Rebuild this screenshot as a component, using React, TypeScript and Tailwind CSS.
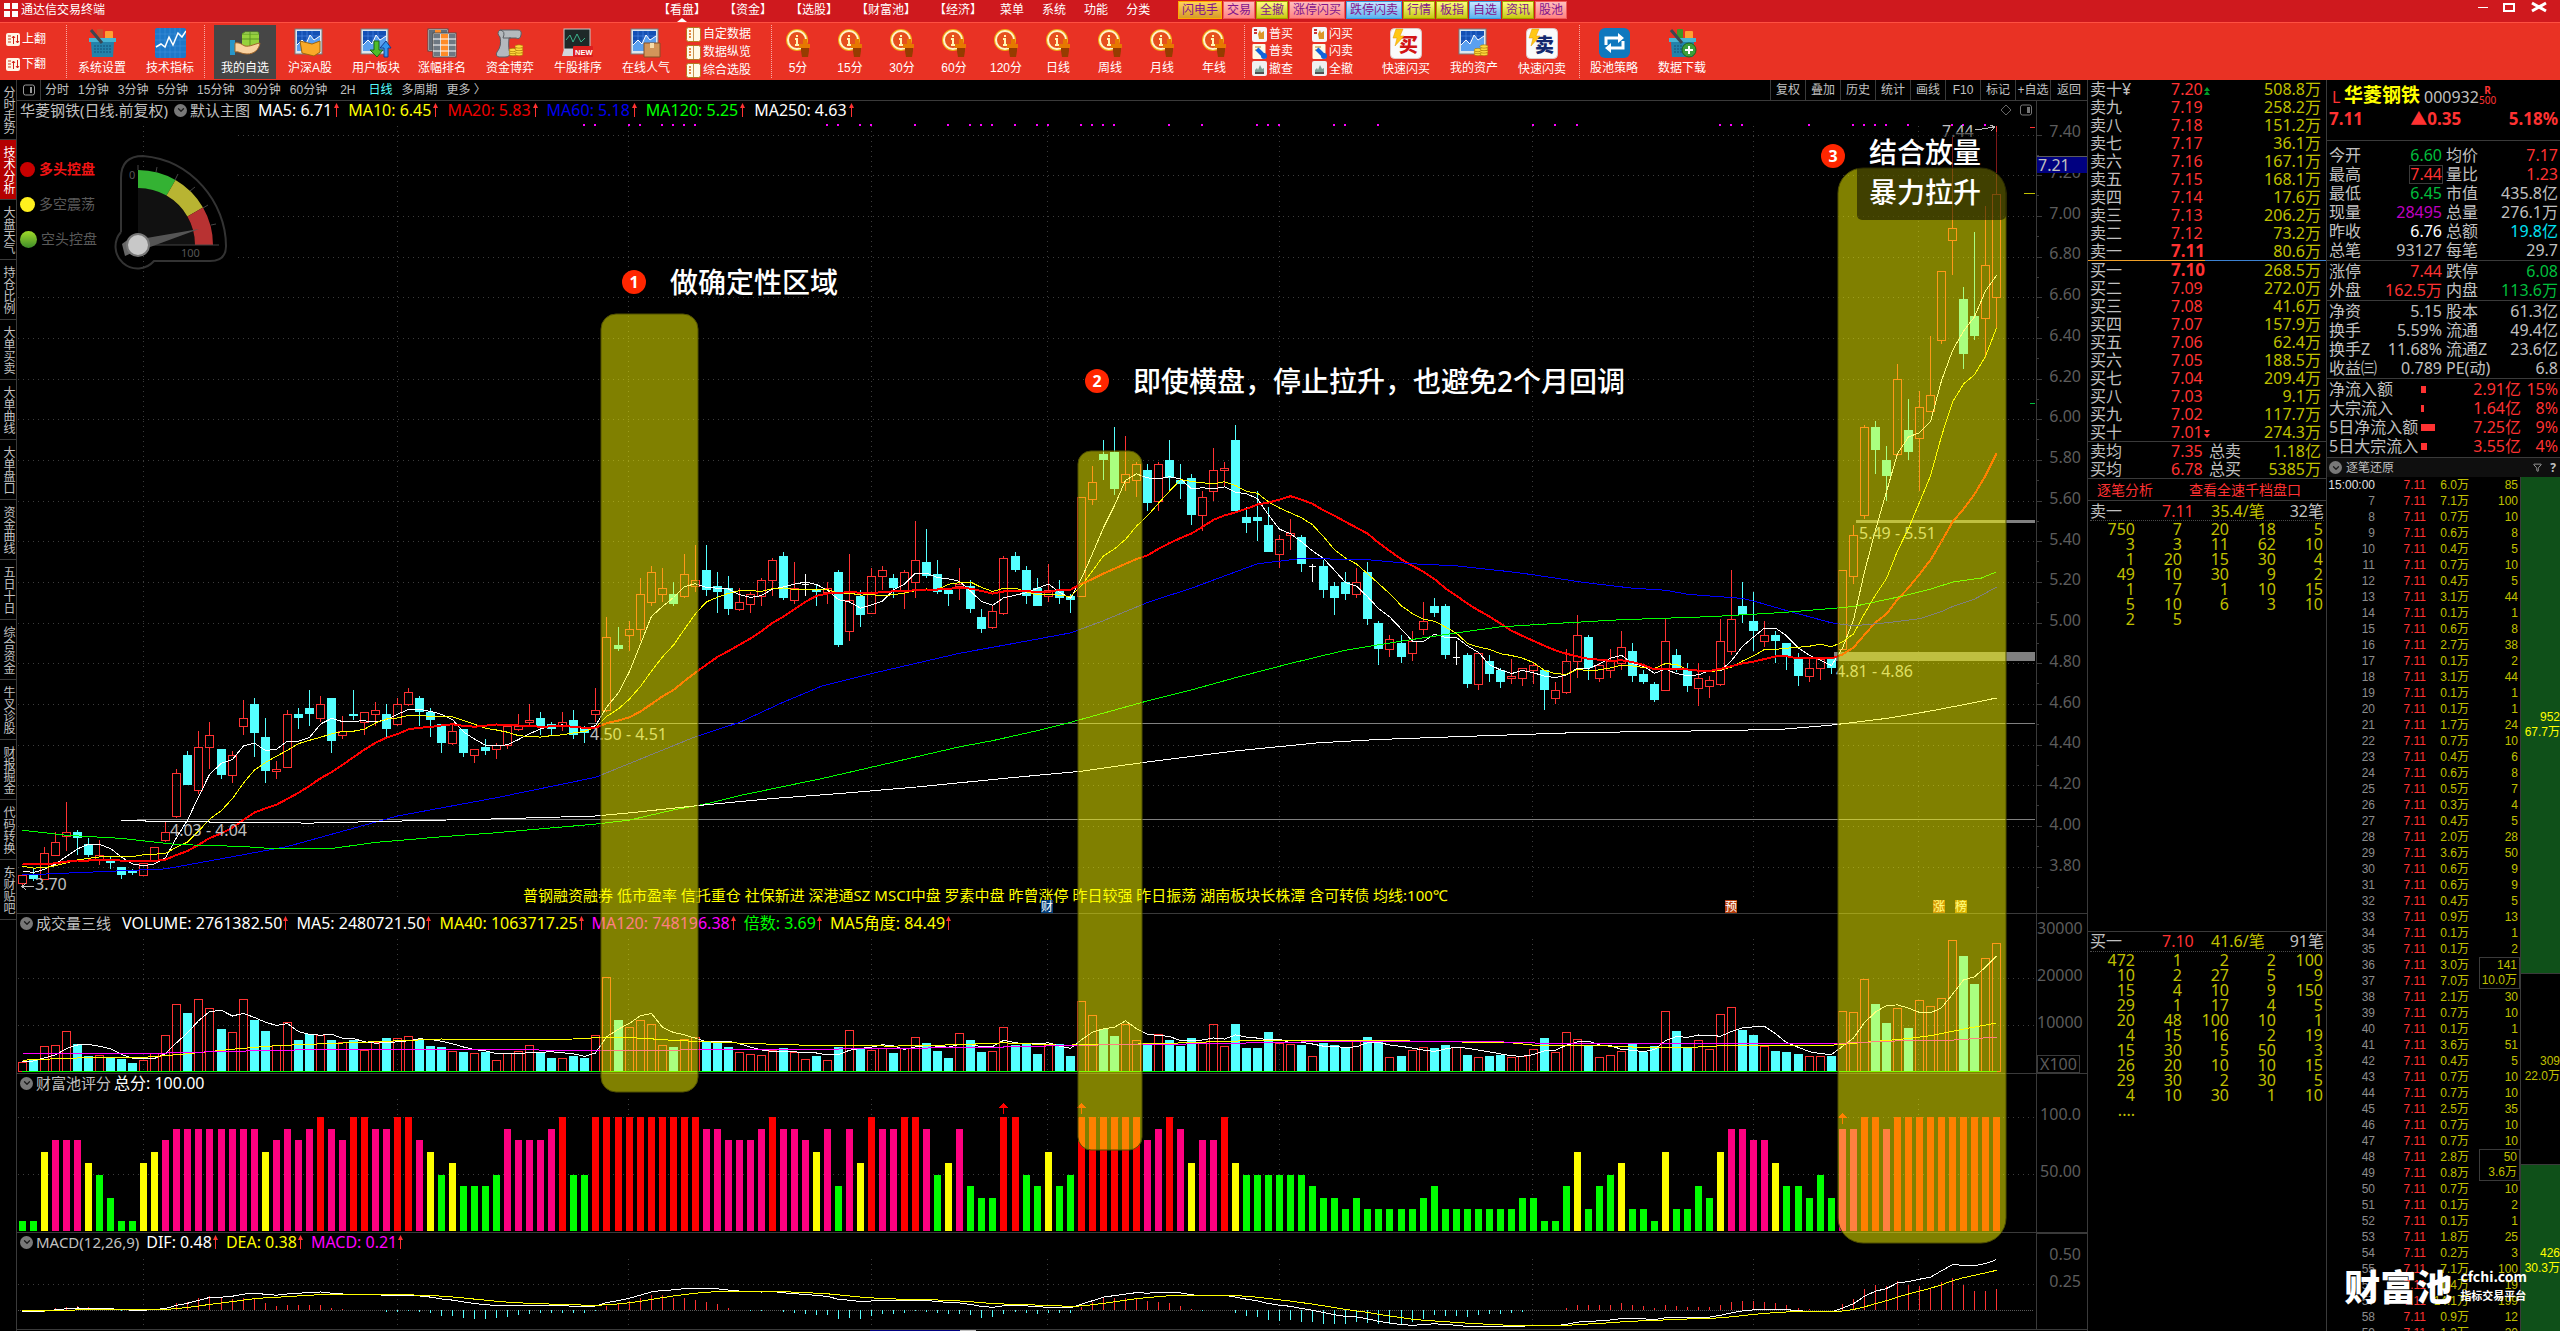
import type { ReactNode } from "react";
import clsx from "clsx";
import { ChevronDown, Filter } from "lucide-react";

type Point = [number, number];
type Candle = [number, number, number, number];

// open, high, low, close (cents)
const candles: Candle[] = [
  [372, 376, 370, 376], [376, 379, 373, 374], [374, 390, 374, 387], [386, 397, 386, 392], [395, 412, 388, 397],
  [397, 398, 386, 394], [391, 394, 385, 386], [384, 393, 381, 386], [384, 385, 379, 382], [380, 380, 374, 376],
  [378, 379, 376, 377], [376, 382, 376, 382], [383, 390, 383, 390], [393, 402, 392, 397], [405, 428, 404, 426],
  [435, 437, 420, 420], [418, 447, 416, 439], [439, 451, 428, 445], [438, 438, 423, 425], [425, 437, 421, 435],
  [449, 462, 445, 453], [460, 463, 434, 446], [444, 453, 421, 427], [427, 432, 423, 428], [429, 457, 429, 455],
  [455, 458, 448, 453], [458, 467, 449, 455], [453, 464, 451, 460], [463, 463, 436, 442], [445, 454, 443, 447],
  [455, 467, 452, 454], [451, 456, 445, 456], [455, 461, 449, 457], [455, 460, 444, 448], [450, 463, 449, 460],
  [460, 468, 459, 466], [463, 464, 449, 456], [456, 458, 444, 452], [450, 450, 436, 441], [441, 450, 440, 447],
  [448, 448, 434, 436], [435, 438, 431, 438], [439, 443, 435, 437], [438, 441, 433, 440], [440, 450, 438, 449],
  [448, 455, 447, 449], [451, 460, 449, 452], [453, 456, 445, 449], [450, 451, 445, 448], [449, 456, 447, 451],
  [452, 457, 443, 445], [448, 449, 441, 446], [455, 468, 451, 457], [457, 503, 456, 493], [489, 498, 486, 487],
  [494, 501, 486, 497], [497, 522, 491, 514], [510, 528, 508, 525], [514, 527, 510, 517], [514, 520, 508, 509],
  [513, 534, 512, 524], [518, 538, 515, 521], [526, 538, 513, 516], [518, 525, 505, 515], [517, 523, 504, 507],
  [507, 517, 506, 510], [509, 515, 505, 514], [513, 522, 508, 521], [521, 532, 513, 531], [533, 535, 511, 512],
  [511, 530, 509, 517], [519, 524, 513, 519], [516, 519, 508, 515], [515, 520, 509, 517], [525, 526, 488, 489],
  [496, 534, 491, 511], [513, 516, 498, 504], [505, 527, 505, 523], [523, 528, 516, 526], [522, 524, 512, 517],
  [516, 526, 507, 525], [520, 550, 512, 531], [530, 546, 522, 523], [524, 531, 514, 515], [516, 516, 508, 514],
  [518, 527, 511, 519], [518, 521, 505, 507], [503, 507, 495, 497], [498, 508, 497, 506], [505, 533, 504, 532],
  [533, 535, 525, 526], [526, 528, 509, 513], [517, 522, 508, 508], [513, 529, 510, 516], [516, 521, 509, 512],
  [513, 514, 505, 511], [513, 562, 513, 562], [561, 577, 558, 569], [583, 590, 570, 580], [584, 596, 563, 566],
  [569, 592, 565, 573], [570, 579, 562, 578], [575, 578, 555, 559], [560, 579, 555, 578], [580, 590, 565, 571],
  [570, 578, 561, 568], [571, 573, 548, 553], [553, 565, 545, 562], [565, 586, 560, 575], [575, 579, 567, 576],
  [590, 597, 555, 555], [552, 557, 544, 549], [552, 565, 540, 550], [548, 557, 535, 535], [534, 543, 527, 541],
  [543, 551, 536, 544], [542, 543, 525, 529], [528, 529, 520, 528], [528, 531, 512, 516], [518, 520, 504, 512],
  [520, 525, 511, 514], [514, 527, 512, 520], [525, 530, 499, 502], [500, 501, 479, 487], [487, 494, 483, 492],
  [490, 494, 480, 483], [485, 496, 481, 491], [497, 510, 494, 501], [508, 512, 503, 505], [508, 509, 482, 484],
  [483, 491, 479, 483], [484, 485, 468, 470], [470, 485, 467, 485], [481, 484, 471, 475], [477, 478, 468, 471],
  [473, 482, 470, 474], [473, 478, 469, 478], [477, 480, 470, 479], [477, 477, 457, 467], [463, 471, 460, 467],
  [466, 487, 465, 481], [481, 504, 473, 494], [493, 494, 472, 478], [473, 480, 471, 479], [477, 487, 473, 481],
  [480, 496, 477, 488], [486, 490, 471, 474], [475, 477, 470, 471], [470, 471, 461, 462], [467, 502, 467, 491],
  [484, 487, 476, 477], [477, 480, 466, 469], [468, 480, 459, 473], [469, 474, 463, 472], [470, 502, 469, 491],
  [486, 526, 484, 502], [508, 520, 500, 504], [501, 515, 486, 496], [491, 501, 488, 494], [494, 496, 480, 491],
  [490, 490, 477, 483], [483, 485, 469, 474], [474, 483, 471, 478], [478, 483, 472, 482], [482, 482, 475, 478],
  [487, 526, 487, 526], [523, 548, 519, 543], [553, 597, 551, 596], [596, 599, 573, 585], [580, 587, 560, 572],
  [583, 627, 582, 620], [595, 610, 580, 584], [591, 614, 565, 606], [604, 641, 604, 612], [639, 673, 637, 673],
  [688, 739, 671, 694], [659, 665, 625, 632], [651, 692, 639, 641], [650, 705, 630, 676], [660, 744, 645, 711],
];

// closes before the first visible candle, needed by the averages
const history = [383, 385, 382, 380, 384, 386, 383, 380, 382, 384, 383, 385, 383, 382, 380, 378, 379, 379, 378];

// volume in units of 100
const volumes = [
  21, 28, 55, 57, 87, 60, 33, 36, 30, 28, 20, 26, 40, 79, 145, 126, 155, 136, 92, 85, 155, 111, 86, 57, 106, 69, 81, 78, 67, 63,
  67, 46, 63, 73, 72, 77, 67, 56, 54, 45, 43, 40, 42, 26, 40, 44, 57, 43, 30, 30, 33, 30, 79, 202, 111, 95, 111, 102, 57, 54,
  71, 74, 66, 63, 54, 43, 38, 36, 47, 51, 42, 28, 34, 26, 54, 89, 48, 47, 52, 41, 52, 74, 62, 45, 30, 83, 69, 43, 45, 95,
  58, 61, 39, 57, 60, 35, 151, 121, 92, 77, 102, 68, 60, 81, 67, 56, 73, 63, 102, 55, 101, 50, 52, 84, 62, 60, 58, 33, 61, 58,
  51, 65, 75, 65, 32, 35, 47, 53, 52, 58, 53, 37, 32, 33, 37, 32, 34, 49, 73, 43, 85, 70, 57, 32, 36, 45, 60, 43, 55, 130,
  88, 52, 68, 49, 123, 138, 90, 79, 55, 45, 43, 39, 34, 34, 35, 130, 128, 198, 145, 105, 136, 94, 153, 140, 157, 281, 247, 186, 243, 274,
];

const scores = [
  10, 10, 70, 80, 80, 80, 60, 50, 30, 10, 10, 60, 70, 80, 90, 90, 90, 90, 90, 90, 90, 90, 70, 80, 90, 80, 90, 100, 90, 80,
  100, 100, 90, 90, 100, 100, 80, 70, 50, 60, 40, 40, 40, 50, 90, 80, 80, 80, 90, 100, 50, 50, 100, 100, 100, 100, 100, 100, 100, 100,
  100, 100, 90, 90, 80, 80, 80, 90, 100, 90, 90, 80, 70, 90, 40, 90, 60, 100, 90, 90, 100, 100, 90, 50, 60, 90, 40, 30, 30, 100,
  100, 50, 40, 70, 40, 50, 100, 100, 100, 100, 100, 100, 80, 90, 100, 90, 60, 80, 80, 100, 60, 50, 50, 50, 50, 50, 50, 40, 30, 30,
  20, 30, 20, 20, 20, 20, 20, 30, 40, 20, 20, 20, 20, 20, 20, 20, 30, 30, 10, 10, 40, 70, 20, 40, 50, 60, 20, 20, 10, 70,
  20, 20, 40, 30, 70, 90, 90, 80, 80, 60, 40, 40, 30, 50, 30, 90, 90, 100, 100, 90, 100, 100, 100, 100, 100, 100, 100, 100, 100, 100,
];

const ma60: Point[] = [
  [0, 376], [13, 379], [19, 385], [24, 390], [34, 405], [43, 414], [52, 424], [61, 444], [65, 451], [69, 461], [72.5, 469],
  [77, 475], [85, 485], [90, 490], [95, 495], [98, 501], [102, 510], [106, 517], [110, 525], [112, 529], [116, 531.6],
  [122, 531], [126, 529], [130, 528], [135, 525], [137, 523.6], [141.4, 520], [146, 517], [149, 516], [151, 514], [156, 512],
  [157.4, 510], [160, 506], [164, 500], [166, 498.5], [169, 500], [172, 502], [174, 505.5], [175, 508], [177, 511.6], [179, 517.6],
];
const ma120: Point[] = [
  [0, 398], [4, 395.5], [9, 394], [14, 391], [20, 390], [22.5, 389], [28, 389], [32, 392], [38.5, 395], [42.5, 396.6],
  [52, 401], [55, 403], [59, 408], [62, 411], [65, 415], [69, 419.5], [72.6, 423.6], [77, 429], [81, 434], [85, 439],
  [88, 442], [92, 447], [95, 451], [98, 455.6], [102, 461.6], [106, 467], [110, 473], [115, 480], [120, 486.5], [125, 491],
  [130, 495], [134, 498], [140, 500], [145, 501.5], [153, 503], [159.5, 505], [164, 507], [166, 508], [170.4, 513],
  [173, 516.5], [175, 520], [177.6, 522], [179, 525],
];
const ma250: Point[] = [
  [9, 403], [10.5, 402.6], [17.5, 402], [26, 401.5], [30, 402], [42.5, 403.5], [52, 405], [55, 406.5], [61.6, 410.3],
  [68, 413.6], [74, 416], [80.6, 419], [90, 424], [96, 427], [102, 431.6], [110, 437], [117.5, 441], [123, 442.6],
  [130, 444], [141, 446], [154, 447], [159.5, 447.6], [164, 449.7], [169, 453], [173, 456.6], [176, 459.7], [179, 463],
];
const volMa40: Point[] = [
  [0, 25], [4, 29], [7, 31], [11, 31], [14.7, 38], [19.4, 49], [23, 56], [27.5, 60], [35, 67], [38, 70], [43, 68], [50, 70],
  [53, 74], [56, 72], [59, 67], [63, 63], [66.5, 60], [71, 57], [79, 55], [85, 58], [89, 62], [94, 57], [103, 60], [107.6, 64],
  [112, 67], [124, 67], [127, 65], [135, 62], [137, 57], [142, 57], [146, 53], [152, 53], [155, 57], [164, 57], [167, 63],
  [170.6, 70], [173, 77], [176, 91], [179, 104],
];
const volMa120: Point[] = [
  [0, 40], [12.5, 40], [17.5, 43], [23, 46], [28, 48], [43, 48], [52, 45], [56, 46], [67, 48], [76, 49], [89, 53], [96, 57],
  [108, 60], [114, 63], [120, 65], [133, 65], [136, 62], [141, 60], [164, 60], [167, 63], [170, 66], [174, 66], [179, 74],
];

const signalDots = [
  51, 52, 55, 56, 58, 59, 60, 61, 73, 74, 76, 77, 81, 84, 86, 87, 88, 90, 92, 93, 96, 97, 98, 99, 104, 107, 112, 113, 114,
  119, 120, 123, 137, 139, 141, 154, 155, 156, 162, 166, 167, 168, 169, 171, 175, 176, 178,
];
const monthLines = [143, 397, 628, 871, 1047, 1279, 1532, 1753, 1918];

const RED = "#ff3232";
const CYAN = "#54ffff";

const xAt = (i: number) => Math.round(22 + i * 11.028);
const priceY = (cents: number) => 134.6 + (740 - cents) * 2.034;
const volumeY = (v: number) => 1072 - v * 0.471;
const scoreY = (v: number) => 1232 - v * 1.15;
const macdY = (v: number) => 1310 - v * 1.04;

const closes = candles.map((c) => c[3]);

const average = (values: number[], n: number, before: number[]) => {
  const all = [...before, ...values];
  return values.map((_, i) => {
    const end = i + before.length + 1;
    const part = all.slice(Math.max(0, end - n), end);
    return part.reduce((a, b) => a + b, 0) / part.length;
  });
};

const ema = (values: number[], n: number) => {
  let last = values[0];
  return values.map((v) => (last = last + ((v - last) * 2) / (n + 1)));
};

const fast = ema([...history, ...closes], 12);
const slow = ema([...history, ...closes], 26);
const difAll = fast.map((v, i) => v - slow[i]);
const deaAll = ema(difAll, 9);
const dif = difAll.slice(history.length);
const dea = deaAll.slice(history.length);

const linePoints = (points: Point[], y: (v: number) => number) =>
  points.map(([i, v]) => `${xAt(i) + 0.5},${y(v).toFixed(1)}`).join(" ");
const indexed = (values: number[]): Point[] => values.map((v, i) => [i, v]);

const Line = ({ points, y, color, width = 1 }: { points: Point[]; y: (v: number) => number; color: string; width?: number }) => (
  <polyline points={linePoints(points, y)} fill="none" stroke={color} strokeWidth={width} />
);

const Grid = ({ rows, top, bottom }: { rows: number[]; top: number; bottom: number }) => (
  <g stroke="#3c3c3c" strokeDasharray="1 4">
    {rows.map((y) => (
      <line key={y} x1={y < 260 ? 238 : 18} x2={2034} y1={Math.round(y) + 0.5} y2={Math.round(y) + 0.5} />
    ))}
    {monthLines.map((x) => (
      <line key={x} x1={x + 0.5} x2={x + 0.5} y1={top} y2={bottom} />
    ))}
  </g>
);

const UpArrow = ({ className }: { className?: string }) => (
  <svg className={clsx("inline-block h-[14px] w-[7px]", className)} viewBox="0 0 7 14">
    <path d="M3.5 1v13" stroke={RED} />
    <path d="M1 5l2.500-5L6 5z" fill={RED} />
  </svg>
);

const Collapse = () => (
  <button className="flex size-[13px] items-center justify-center rounded-full bg-[#787878]" aria-label="折叠">
    <ChevronDown size={10} strokeWidth={3} color="#1c1c1c" />
  </button>
);

interface Value {
  text: string;
  color: string;
}

const PanelHeader = ({ title, values }: { title: string; values: Value[] }) => (
  <div className="relative flex h-[18px] items-center gap-[7px] pl-[3px] leading-[18px]">
    <div className="flex items-center gap-[3px]">
      <Collapse />
      <span className="text-[15px] text-[#c0c0c0]">{title}</span>
    </div>
    {values.map((v) => (
      <span key={v.text} className={clsx("flex items-center whitespace-nowrap", v.color)}>
        {v.text}
        <UpArrow />
      </span>
    ))}
  </div>
);

const AxisColumn = ({ className, children }: { className?: string; children: ReactNode }) => (
  <div className={clsx("relative flex w-[51px] shrink-0 flex-col border-l border-[#3a3a3a] pr-[6px] text-right leading-4 text-[#5c5c5c]", className)}>
    {children}
  </div>
);

const priceLabels = Array.from({ length: 19 }, (_, i) => 740 - i * 20);
const mainValues: Value[] = [
  { text: "MA5: 6.71", color: "text-white" },
  { text: "MA10: 6.45", color: "text-[#ffff00]" },
  { text: "MA20: 5.83", color: "text-[#f00000]" },
  { text: "MA60: 5.18", color: "text-[#0000f0]" },
  { text: "MA120: 5.25", color: "text-[#00ff00]" },
  { text: "MA250: 4.63", color: "text-white" },
];

const CandleShape = ({ candle, index }: { candle: Candle; index: number }) => {
  const [open, high, low, close] = candle;
  const x = xAt(index);
  const color = close > open ? RED : close < open ? CYAN : "#ffffff";
  const top = Math.round(priceY(Math.max(open, close)));
  const bottom = Math.round(priceY(Math.min(open, close)));
  return (
    <g stroke={color}>
      <line x1={x + 0.5} x2={x + 0.5} y1={priceY(high)} y2={top} />
      <line x1={x + 0.5} x2={x + 0.5} y1={bottom} y2={priceY(low)} />
      {close > open && <rect x={x - 3.5} y={top + 0.5} width={8} height={Math.max(2, bottom - top)} fill="none" />}
      {close < open && <rect x={x - 4} y={top} width={9} height={Math.max(2, bottom - top)} fill={color} stroke="none" />}
      {close === open && <line x1={x - 3} x2={x + 4} y1={top + 0.5} y2={top + 0.5} />}
    </g>
  );
};

const Gauge = () => (
  <svg className="absolute top-[52px] left-[96px] h-[118px] w-[118px]" viewBox="113 153 118 118">
    <path
      d="M121 232V178q0-22 22-22C192 160 226 203 226 246q0 15-16 15H154a18 18 0 1 1-33-29"
      fill="none"
      stroke="#333"
      strokeWidth="2"
    />
    <path d="M138 245V188a57 57 0 0 1 57 57z" fill="#111" />
    <path d="M138 170a75 75 0 0 1 37.500 10L166.500 195.600A57 57 0 0 0 138 188z" fill="#34b233" />
    <path d="M175.500 180A75 75 0 0 1 203 207.500L187.400 216.500A57 57 0 0 0 166.500 195.600z" fill="#b8b432" />
    <path d="M203 207.500A75 75 0 0 1 213 245H195a57 57 0 0 0-7.600-28.500z" fill="#b83232" />
    <g stroke="#444">
      <path d="M138 165v5M157 167l-1 5M178 174l-3 6M195 187l-5 4M208 205l-5 3M216 224l-5 1M138 245h81" />
    </g>
    <path d="M135 240L199 229L142 250z" fill="#555" />
    <path d="M122 244l8-6 4 14-9 4z" fill="#666" />
    <circle cx="138" cy="245" r="11" fill="#c8c8c8" stroke="#777" strokeWidth="2" />
    <text x="129" y="179" fontSize="11" fill="#555">0</text>
    <text x="181" y="257" fontSize="11" fill="#555">100</text>
  </svg>
);

const Legend = () => (
  <ul className="absolute top-[58px] left-[3px] flex flex-col gap-[15px] text-sm leading-5 text-[#5a5a5a]">
    <li className="flex items-center gap-1">
      <span className="size-[15px] rounded-full bg-[#c80000]" />
      <span className="font-bold text-[#f01414]">多头控盘</span>
    </li>
    <li className="flex items-center gap-1">
      <span className="size-[15px] rounded-full bg-[#fff01e]" />
      多空震荡
    </li>
    <li className="flex items-center gap-1">
      <span className="size-[17px] rounded-full bg-linear-to-b from-[#a0dc28] to-[#3c8c28]" />
      空头控盘
    </li>
  </ul>
);

const marks = [
  { x: 1041, text: "财", fill: "#003c78", color: "#ffffff" },
  { x: 1725, text: "预", fill: "#b43c0a", color: "#ffffff" },
  { x: 1933, text: "涨", fill: "#b43c0a", color: "#ffffff" },
  { x: 1955, text: "榜", fill: "#b46400", color: "#ffffff" },
];

const PricePanel = () => (
  <section className="flex min-h-0 border-b border-[#3a3a3a]">
    <div className="relative min-w-0 flex-1">
      <svg className="absolute inset-0 h-full w-full" viewBox="17 101 2019 812" preserveAspectRatio="none" shapeRendering="crispEdges">
        <Grid rows={priceLabels.map(priceY)} top={126} bottom={900} />
        <g fill="#808080">
          <rect x="588" y="723" width="1447" height="1" />
          <rect x="137" y="819" width="1898" height="1" />
          <rect x="1856" y="520" width="179" height="3" />
          <rect x="1834" y="652" width="201" height="9" />
        </g>
        {candles.map((c, i) => (
          <CandleShape key={i} candle={c} index={i} />
        ))}
        <Line points={indexed(average(closes, 5, history))} y={priceY} color="#ffffff" />
        <Line points={indexed(average(closes, 10, history))} y={priceY} color="#ffff00" />
        <Line points={indexed(average(closes, 20, history))} y={priceY} color="#ff0000" width={2} />
        <Line points={ma60} y={priceY} color="#0000ff" />
        <Line points={ma120} y={priceY} color="#00ff00" />
        <Line points={ma250} y={priceY} color="#ffffff" />
        {signalDots.map((i) => (
          <rect key={i} x={xAt(i) - 1} y="124" width="2" height="2" fill="#ff00ff" />
        ))}
        <path d="M2030 127.500h5" stroke={RED} />
        <path d="M2024 193.500h11" stroke="#c0c000" />
        <path d="M2030 403.500h5" stroke="#00be3c" />
        <g fill="#c0c0c0" fontSize="16">
          <text x="170" y="836">4.03 - 4.04</text>
          <text x="590" y="740">4.50 - 4.51</text>
          <text x="1859" y="539">5.49 - 5.51</text>
          <text x="1836" y="677">4.81 - 4.86</text>
          <text x="35" y="890">3.70</text>
          <text x="1942" y="137">7.44</text>
        </g>
        <path d="M34 886.500H22m4-3l-4 3 4 3M1975 130l20-3m-5-2l5 2-4 4" stroke="#c0c0c0" fill="none" />
        <text x="523" y="901" fill="#ffff00" fontSize="15">
          普钢融资融券 低市盈率 信托重仓 社保新进 深港通SZ MSCI中盘 罗素中盘 昨曾涨停 昨日较强 昨日振荡 湖南板块长株潭 含可转债 均线:100℃
        </text>
        {marks.map((m) => (
          <g key={m.text}>
            <rect x={m.x} y="900" width="12" height="13" fill={m.fill} />
            <text x={m.x} y="911" fontSize="12" fill={m.color}>{m.text}</text>
          </g>
        ))}
      </svg>
      <div className="relative flex h-[18px] items-center gap-2 pl-[3px] leading-[18px]">
        <div className="flex items-center gap-[3px] text-[15px] text-[#c0c0c0]">
          <span className="pr-[3px]">华菱钢铁(日线.前复权)</span>
          <Collapse />
          <span>默认主图</span>
        </div>
        {mainValues.map((v) => (
          <span key={v.text} className={clsx("flex items-center gap-px whitespace-nowrap", v.color)}>
            {v.text}
            <UpArrow />
          </span>
        ))}
        <div className="ml-auto flex items-center gap-2 pr-1">
          <svg width="12" height="12" viewBox="0 0 12 12">
            <path d="M6 1l5 5-5 5-5-5z" fill="none" stroke="#666" />
          </svg>
          <svg width="12" height="12" viewBox="0 0 12 12">
            <rect x="0.500" y="1" width="11" height="10" rx="2" fill="none" stroke="#777" />
            <rect x="7" y="3" width="3" height="6" fill="#777" />
          </svg>
        </div>
      </div>
      <Legend />
      <Gauge />
    </div>
    <AxisColumn className="justify-between pt-[22px] pb-[40px]">
      <svg className="absolute inset-0 h-full w-full" viewBox="0 101 50 812" preserveAspectRatio="none" stroke="#3a3a3a">
        {priceLabels.map((p) => (
          <path key={p} d={`M0 ${Math.round(priceY(p)) + 0.5}h5m-5 20h2`} />
        ))}
      </svg>
      {priceLabels.map((p) => (
        <span key={p} className="relative">{(p / 100).toFixed(2)}</span>
      ))}
      <span className="absolute top-[55px] right-0 left-0 border-t border-[#5c5c5c] bg-[#000080] pl-px text-left leading-4 text-[#c0c0c0]">7.21</span>
    </AxisColumn>
  </section>
);

const VolumePanel = () => (
  <section className="flex min-h-0 border-b border-[#3a3a3a]">
    <div className="relative min-w-0 flex-1">
      <svg className="absolute inset-0 h-full w-full" viewBox="17 914 2019 159" preserveAspectRatio="none" shapeRendering="crispEdges">
        <Grid rows={[978, 1025]} top={939} bottom={1072} />
        {volumes.map((v, i) => {
          const y = Math.round(volumeY(v));
          const up = candles[i][3] >= candles[i][0];
          return up ? (
            <rect key={i} x={xAt(i) - 3.5} y={y + 0.5} width={8} height={1071 - y} fill="none" stroke={RED} />
          ) : (
            <rect key={i} x={xAt(i) - 4} y={y} width={9} height={1072 - y} fill={CYAN} />
          );
        })}
        <Line points={indexed(average(volumes, 5, [20, 22, 24, 22]))} y={volumeY} color="#ffffff" />
        <Line points={volMa40} y={volumeY} color="#ffff00" />
        <Line points={volMa120} y={volumeY} color="#ff00ff" />
        <rect x="22" y="1071" width="1975" height="1" fill="#00ff00" />
      </svg>
      <PanelHeader
        title="成交量三线"
        values={[
          { text: "VOLUME: 2761382.50", color: "pl-1 text-white" },
          { text: "MA5: 2480721.50", color: "text-white" },
          { text: "MA40: 1063717.25", color: "text-[#ffff00]" },
          { text: "MA120: 748196.38", color: "text-[#ff00ff]" },
          { text: "倍数: 3.69", color: "text-[#00ff00]" },
          { text: "MA5角度: 84.49", color: "text-[#ffff00]" },
        ]}
      />
    </div>
    <AxisColumn className="gap-[31px] pt-[6px]">
      <span>30000</span>
      <span>20000</span>
      <span>10000</span>
      <span className="absolute bottom-0 left-0 border border-[#3a3a3a] px-[2px]">X100</span>
    </AxisColumn>
  </section>
);

const scoreColor = (s: number) => (s > 90 ? "#ff0000" : s > 70 ? "#ff0080" : s > 50 ? "#ffff00" : "#00ff00");

const ScorePanel = () => (
  <section className="flex min-h-0 border-b border-[#3a3a3a]">
    <div className="relative min-w-0 flex-1">
      <svg className="absolute inset-0 h-full w-full" viewBox="17 1074 2019 158" preserveAspectRatio="none" shapeRendering="crispEdges">
        <Grid rows={[1117, 1174]} top={1099} bottom={1232} />
        {scores.map((s, i) => (
          <rect key={i} x={xAt(i) - 3} y={scoreY(s)} width={7} height={1231 - scoreY(s)} fill={scoreColor(s)} />
        ))}
        {[[89, 1103], [96, 1103], [165, 1113]].map(([i, y]) => (
          <g key={i} fill="#ff0000">
            <path d={`M${xAt(i) - 4} ${y + 5}l4.500-5 4.500 5z`} />
            <rect x={xAt(i)} y={y + 4} width={1} height={7} />
          </g>
        ))}
      </svg>
      <div className="relative flex h-[18px] items-center gap-[3px] pl-[3px] leading-[18px]">
        <Collapse />
        <span className="text-[15px] text-[#c0c0c0]">财富池评分</span>
        <span className="text-white">总分: 100.00</span>
      </div>
    </div>
    <AxisColumn className="gap-[41px] pt-8">
      <span>100.0</span>
      <span>50.00</span>
    </AxisColumn>
  </section>
);

const MacdPanel = () => (
  <section className="flex min-h-0 border-b border-[#3a3a3a]">
    <div className="relative min-w-0 flex-1">
      <svg className="absolute inset-0 h-full w-full" viewBox="17 1233 2019 96" preserveAspectRatio="none" shapeRendering="crispEdges">
        <Grid rows={[1284]} top={1259} bottom={1328} />
        <line x1="18" x2="2034" y1="1310.500" y2="1310.500" stroke="#5a5a5a" strokeDasharray="1 1" />
        {dif.map((d, i) => {
          const bar = (d - dea[i]) * 2;
          return <line key={i} x1={xAt(i) + 0.5} x2={xAt(i) + 0.5} y1="1310" y2={macdY(bar)} stroke={bar > 0 ? RED : CYAN} />;
        })}
        <Line points={indexed(dif)} y={macdY} color="#ffffff" />
        <Line points={indexed(dea)} y={macdY} color="#ffff00" />
      </svg>
      <PanelHeader
        title="MACD(12,26,9)"
        values={[
          { text: "DIF: 0.48", color: "text-white" },
          { text: "DEA: 0.38", color: "text-[#ffff00]" },
          { text: "MACD: 0.21", color: "text-[#ff00ff]" },
        ]}
      />
    </div>
    <AxisColumn className="gap-[11px] border-t pt-3">
      <span>0.50</span>
      <span>0.25</span>
    </AxisColumn>
  </section>
);

const CircleNumber = ({ children }: { children: ReactNode }) => (
  <span className="flex size-6 items-center justify-center rounded-full bg-[#ff2600] text-base font-bold text-white">{children}</span>
);

const Annotations = () => (
  <>
    <svg className="pointer-events-none absolute inset-0 h-full w-full" viewBox="17 101 2070 1230" preserveAspectRatio="none">
      <g fill="#ffff00" fillOpacity="0.500" stroke="#505000">
        <rect x="601" y="314" width="97" height="778" rx="15" />
        <rect x="1078" y="451" width="64" height="699" rx="13" />
        <rect x="1838" y="168" width="168" height="1075" rx="25" />
      </g>
    </svg>
    <div className="absolute top-[165px] left-[605px] flex items-center gap-6">
      <CircleNumber>1</CircleNumber>
      <p className="text-[28px] leading-8 font-medium text-white">做确定性区域</p>
    </div>
    <div className="absolute top-[264px] left-[1068px] flex items-center gap-6">
      <CircleNumber>2</CircleNumber>
      <p className="text-[28px] leading-8 font-medium text-white">即使横盘，停止拉升，也避免2个月回调</p>
    </div>
    <div className="absolute top-[31px] left-[1804px] flex items-start gap-3">
      <div className="pt-3">
        <CircleNumber>3</CircleNumber>
      </div>
      <p className="h-[88px] w-[149px] rounded-[5px] bg-black/50 pl-3 text-[28px] leading-10 font-medium text-white">
        结合放量
        <br />
        暴力拉升
      </p>
    </div>
  </>
);

const periods = ["分时", "1分钟", "3分钟", "5分钟", "15分钟", "30分钟", "60分钟", "2H", "日线", "多周期", "更多 〉"];
const chartTools = ["复权", "叠加", "历史", "统计", "画线", "F10", "标记", "+自选", "返回"];

const PeriodBar = () => (
  <nav className="flex h-[21px] shrink-0 items-stretch border-b border-[#3a3a3a] font-['Liberation_Sans','Noto_Sans_CJK_SC',sans-serif] text-xs text-[#c0c0c0]">
    <button className="flex w-6 items-center justify-center border-r border-[#3a3a3a]" aria-label="布局">
      <svg width="12" height="12" viewBox="0 0 12 12">
        <rect x="0.500" y="1" width="11" height="10" rx="2" fill="none" stroke="#999" />
        <rect x="7" y="3" width="2" height="6" fill="#999" />
      </svg>
    </button>
    <div className="flex items-center gap-[9px] pl-1">
      {periods.map((p) => (
        <button key={p} className={clsx("whitespace-nowrap", p === "日线" && "text-[#54ffff]", p === "2H" && "px-1")}>
          {p}
        </button>
      ))}
    </div>
    <div className="ml-auto flex">
      {chartTools.map((t) => (
        <button key={t} className="w-[35px] whitespace-nowrap border-l border-[#3a3a3a] last:w-[37px]">
          {t}
        </button>
      ))}
    </div>
  </nav>
);

/* ---- toolbar icons ---- */

const Coins = ({ x, y }: { x: number; y: number }) => (
  <g transform={`translate(${x} ${y})`} stroke="#a06e00" strokeWidth="0.600" fill="#ffd83c">
    <ellipse cx="4" cy="11" rx="4" ry="1.700" />
    <ellipse cx="4" cy="9" rx="4" ry="1.700" />
    <ellipse cx="4" cy="7" rx="4" ry="1.700" />
    <ellipse cx="10" cy="11" rx="4" ry="1.700" />
    <ellipse cx="10" cy="8.500" rx="4" ry="1.700" />
    <ellipse cx="10" cy="6" rx="4" ry="1.700" />
    <ellipse cx="10" cy="3.500" rx="4" ry="1.700" />
  </g>
);

const BasketIcon = ({ add }: { add?: boolean }) => (
  <svg width="30" height="30" viewBox="0 0 30 30">
    <rect x="10" y="1" width="6" height="10" rx="1" fill={add ? "#3c9628" : "#c8502d"} />
    <rect x="18" y="3" width="8" height="9" rx="1" fill="#ffa032" />
    <path d="M4 14h23l-1 15H5z" fill="#2382aa" />
    <path d="M2 10h27v4H2z" fill="#46b4d2" />
    <path d="M7 18h17M7 21h17M7 24h17" stroke="#145078" strokeDasharray="2 1" />
    <path d="M4 2l11 13" stroke="#3c4650" strokeWidth="3" />
    {add && <circle cx="22" cy="22" r="7" fill="#3ca03c" stroke="#1e641e" />}
    {add && <path d="M22 18v8M18 22h8" stroke="#fff" strokeWidth="2" />}
  </svg>
);

const TileChartIcon = () => (
  <svg width="31" height="30" viewBox="0 0 31 30">
    <rect width="31" height="30" rx="2" fill="#1e78c8" />
    <path d="M5 0v30M10 0v30M15 0v30M20 0v30M25 0v30M0 6h31M0 12h31M0 18h31M0 24h31" stroke="#4696dc" strokeWidth="0.500" />
    <path d="M1 19l5-3 4 3 4-10 4 8 5-12 4 4 4-6" fill="none" stroke="#fff" strokeWidth="1.500" />
  </svg>
);

const HandIcon = () => (
  <svg width="32" height="30" viewBox="0 0 32 30">
    <rect x="13" y="6" width="17" height="13" fill="#96d23c" />
    <path d="M13 6l3-2h13l1 2zM21 4v15M13 11h17" stroke="#5a9620" fill="#c8f078" />
    <path d="M1 12h5v15H1z" fill="#2896c8" />
    <path d="M6 15c5-1 7 2 10 3 5 1 9-2 15-3-1 7-6 11-13 11-6 0-8-3-12-2z" fill="#fad2a0" stroke="#a06428" />
  </svg>
);

const MonitorIcon = ({ children }: { children?: ReactNode }) => (
  <svg width="32" height="30" viewBox="0 0 32 30">
    <rect x="1" y="1" width="27" height="25" fill="#dce6f0" stroke="#787878" />
    <rect x="3" y="3" width="23" height="20" fill="#1450b4" />
    <path d="M8 3v20M13 3v20M18 3v20M3 8h23M3 13h23" stroke="#5a96f0" strokeWidth="0.500" />
    <path d="M3 17l5-5 4 4 4-9 4 5 6-4v15H3z" fill="#5aa0f0" />
    <path d="M3 17l5-5 4 4 4-9 4 5 6-4" fill="none" stroke="#fff" />
    {children}
  </svg>
);

const SheetsIcon = () => (
  <svg width="30" height="30" viewBox="0 0 30 30">
    <rect x="1" y="1" width="20" height="22" fill="#e6e6e6" stroke="#505050" />
    <path d="M2 2h6v20H2zM14 2h6v20h-6z" fill="#646e78" />
    <path d="M8 2h6v20H8z" fill="#ff8c28" />
    <rect x="6" y="5" width="23" height="24" fill="#dcdcdc" stroke="#505050" />
    <path d="M7 6h6v22H7zM22 6h6v22h-6z" fill="#6e7882" />
    <path d="M14 6h7v22h-7z" fill="#ff8c28" />
    <path d="M6 11h23M6 17h23M6 23h23" stroke="#fff" />
  </svg>
);

const ScrollIcon = () => (
  <svg width="32" height="30" viewBox="0 0 32 30">
    <path d="M6 2h18q4 0 3 5t-5 3H15q-1 11 1 15 0 4-5 4H5q-4-1-2-5 5-6 3-15-4-4 0-7z" fill="#b4b9be" stroke="#5a5f64" />
    <path d="M6 2q6 1 3 8h8" fill="none" stroke="#5a5f64" />
    <Coins x={15} y={15} />
  </svg>
);

const LaptopIcon = () => (
  <svg width="32" height="30" viewBox="0 0 32 30">
    <rect x="2" y="1" width="26" height="20" fill="#1e2828" stroke="#c8c8c8" />
    <path d="M4 12l4-5 3 7 4-8 4 8 4-4" fill="none" stroke="#3cb48c" />
    <path d="M2 21h26l2 7H0z" fill="#d2d7dc" />
    <rect x="11" y="18" width="20" height="11" rx="1" fill="#dc1e1e" />
    <text x="13" y="26.500" fontSize="7.500" fontWeight="700" fill="#fff">NEW</text>
  </svg>
);

const ClockIcon = () => (
  <svg width="26" height="30" viewBox="0 0 26 30">
    <circle cx="12" cy="12" r="11" fill="#f0aa14" />
    <circle cx="12" cy="12" r="9" fill="#e6501e" stroke="#fff5c8" strokeWidth="2" />
    <path d="M12 7v2M10 11h2v6M10 17h4" stroke="#fff5b4" strokeWidth="2" fill="none" />
    <path d="M16 18h8v5l-1 6h-6l-1-6z" fill="#963c00" />
    <path d="M18 11h4v5h3v4H14v-4h4z" fill="#e67800" />
  </svg>
);

const TradeIcon = ({ text, color }: { text: string; color: string }) => (
  <svg width="32" height="31" viewBox="0 0 32 31">
    <rect x="0.500" y="0.500" width="31" height="30" rx="4" fill="#fafafa" stroke="#dcc8c8" />
    <text x="9" y="24" fontSize="19" fontWeight="900" fill={color}>{text}</text>
    <path d="M6 1h7l-3 7h4L5 18l2-8H3z" fill="#ffc814" stroke="#e69600" strokeWidth="0.500" />
  </svg>
);

const SwapIcon = () => (
  <svg width="31" height="30" viewBox="0 0 31 30">
    <rect width="31" height="30" rx="6" fill="#0f78be" />
    <path d="M7 17v-7h13M24 13v7H11" fill="none" stroke="#fff" strokeWidth="3" />
    <path d="M19 5l6 5-6 5zM12 15l-6 5 6 5z" fill="#fff" />
  </svg>
);

const FlipIcon = () => (
  <svg width="14" height="13" viewBox="0 0 14 13">
    <rect width="14" height="13" rx="2" fill="#fff5e6" />
    <path d="M2 3h3M2 6h3M2 9h3" stroke="#c83c1e" />
    <path d="M7.500 11V3M6 5l1.500-2L9 5M11.500 2v8M10 8l1.500 2L13 8" stroke="#d21e14" fill="none" />
  </svg>
);

const BookIcon = () => (
  <svg width="15" height="15" viewBox="0 0 15 15">
    <rect x="0.500" y="0.500" width="14" height="14" rx="2" fill="#fffae6" stroke="#b4781e" />
    <path d="M7.500 1v13" stroke="#c89650" />
    <path d="M3 4h2M3 7h2M3 10h2" stroke="#dc6414" strokeWidth="1.500" />
  </svg>
);

const HandPageIcon = () => (
  <svg width="15" height="15" viewBox="0 0 15 15">
    <rect width="15" height="15" rx="2" fill="#f5f5fa" />
    <path d="M2 3h3M2 6h3" stroke="#c83232" strokeWidth="2" />
    <path d="M6 7l2-4 1 3 3-2v8H7z" fill="#dc9628" />
  </svg>
);

const WrenchIcon = () => (
  <svg width="15" height="15" viewBox="0 0 15 15">
    <rect x="0.500" width="13" height="15" rx="1" fill="#fffae6" />
    <path d="M3 3h6M3 6h4" stroke="#b4821e" />
    <path d="M5 5l7 7" stroke="#1464dc" strokeWidth="4" />
    <circle cx="12" cy="12" r="3" fill="#1464dc" />
  </svg>
);

const UndoIcon = () => (
  <svg width="15" height="15" viewBox="0 0 15 15">
    <rect width="15" height="15" rx="2" fill="#f0f0f0" />
    <path d="M3 12V9l2-2 1 2 2-5 2 4 2-1v5z" fill="#7da096" />
    <path d="M3 12h9" stroke="#505050" strokeWidth="2" />
  </svg>
);

const Tool = ({ label, icon, width = "w-[68px]", active }: { label: string; icon: ReactNode; width?: string; active?: boolean }) => (
  <button className={clsx("my-[2px] flex h-[54px] shrink-0 flex-col items-center gap-[2px] pt-[3px] leading-4", width, active && "bg-[#464646]")}>
    {icon}
    <span className="whitespace-nowrap">{label}</span>
  </button>
);

const SmallTool = ({ label, icon }: { label: string; icon: ReactNode }) => (
  <button className="flex h-[18px] items-center gap-[2px] whitespace-nowrap leading-[18px]">
    {icon}
    {label}
  </button>
);

const Separator = () => <div className="my-[2px] w-px border-l border-dotted border-white/60" />;

const Toolbar = () => (
  <div className="flex h-[58px] shrink-0 border-t border-[#ff5041] bg-[#e93224] font-['Liberation_Sans','Noto_Sans_CJK_SC',sans-serif] text-xs text-white">
    <div className="flex w-[66px] flex-col justify-center gap-[7px] pl-[6px]">
      <SmallTool label="上翻" icon={<FlipIcon />} />
      <SmallTool label="下翻" icon={<FlipIcon />} />
    </div>
    <Separator />
    <div className="flex w-[147px] gap-0 pl-px">
      <Tool label="系统设置" icon={<BasketIcon />} />
      <Tool label="技术指标" icon={<TileChartIcon />} />
      <Separator />
    </div>
    <Tool label="我的自选" icon={<HandIcon />} width="w-[62px]" active />
    <Tool
      label="沪深A股"
      width="w-[68px]"
      icon={
        <MonitorIcon>
          <path d="M6 13l12 3 8-3v11l-6 4-12-3z" fill="#faaa28" stroke="#a0640a" />
        </MonitorIcon>
      }
    />
    <Tool
      label="用户板块"
      width="w-16"
      icon={
        <MonitorIcon>
          <path d="M14 13h5v9h4l-6 7-7-7h4z" fill="#50be28" stroke="#1e6414" />
          <path d="M24 29v-9h-4l6-7 5 7h-3v9z" fill="#3296f0" stroke="#143c8c" />
        </MonitorIcon>
      }
    />
    <Tool label="涨幅排名" icon={<SheetsIcon />} />
    <Tool label="资金博弈" icon={<ScrollIcon />} />
    <Tool label="牛股排序" icon={<LaptopIcon />} />
    <Tool
      label="在线人气"
      icon={
        <MonitorIcon>
          <path d="M14 15h16v14H14z" fill="#d2965a" stroke="#825028" />
          <path d="M20 15h4v5h-4z" fill="#f5dcaa" />
        </MonitorIcon>
      }
    />
    <div className="flex w-[91px] flex-col pt-[2px] pl-[6px]">
      <SmallTool label="自定数据" icon={<BookIcon />} />
      <SmallTool label="数据纵览" icon={<BookIcon />} />
      <SmallTool label="综合选股" icon={<BookIcon />} />
    </div>
    <Separator />
    {["5分", "15分", "30分", "60分", "120分", "日线", "周线", "月线", "年线"].map((p) => (
      <Tool key={p} label={p} icon={<ClockIcon />} width="w-[52px]" />
    ))}
    <div className="w-1" />
    <Separator />
    <div className="grid h-[54px] w-[127px] grid-flow-col grid-cols-2 grid-rows-3 pt-[2px] pl-[7px]">
      <SmallTool label="普买" icon={<HandPageIcon />} />
      <SmallTool label="普卖" icon={<WrenchIcon />} />
      <SmallTool label="撤查" icon={<UndoIcon />} />
      <SmallTool label="闪买" icon={<HandPageIcon />} />
      <SmallTool label="闪卖" icon={<WrenchIcon />} />
      <SmallTool label="全撤" icon={<UndoIcon />} />
    </div>
    <Tool label="快速闪买" icon={<TradeIcon text="买" color="#d21414" />} />
    <Tool label="我的资产" icon={<MonitorIcon><Coins x={16} y={15} /></MonitorIcon>} />
    <Tool label="快速闪卖" icon={<TradeIcon text="卖" color="#14286e" />} />
    <div className="w-[3px]" />
    <Separator />
    <Tool label="股池策略" icon={<SwapIcon />} />
    <Tool label="数据下载" icon={<BasketIcon add />} />
  </div>
);

const GOLD = "from-[#ffd25a] to-[#d79b28] border-[#ffaa00]";
const PINK = "from-[#ffbebe] to-[#ff8282] border-[#f05a5a]";
const LIME = "from-[#ffff78] to-[#c8c800] border-[#a0a000]";
const SKY = "from-[#c8e6ff] to-[#5ab4f0] border-[#3c96dc]";

const quickTabs = [
  { label: "闪电手", tone: GOLD, width: "w-[44px]" },
  { label: "交易", tone: PINK, width: "w-8" },
  { label: "全撤", tone: LIME, width: "w-8" },
  { label: "涨停闪买", tone: PINK, width: "w-[56px]" },
  { label: "跌停闪卖", tone: SKY, width: "w-[56px]" },
  { label: "行情", tone: LIME, width: "w-8" },
  { label: "板指", tone: LIME, width: "w-8" },
  { label: "自选", tone: SKY, width: "w-8" },
  { label: "资讯", tone: LIME, width: "w-8" },
  { label: "股池", tone: PINK, width: "w-8" },
];

const TitleBar = () => (
  <header className="flex h-[22px] shrink-0 bg-[#cf191e] font-['Liberation_Sans','Noto_Sans_CJK_SC',sans-serif] text-xs leading-5 text-white">
    <div className="flex w-[658px] shrink-0 items-start">
      <div className="mt-[3px] ml-1 grid size-[14px] grid-cols-2 gap-[2px]">
        <i className="bg-white" /><i className="bg-white" /><i className="bg-white" /><i className="bg-white" />
      </div>
      <span className="ml-[3px]">通达信交易终端</span>
    </div>
    <nav className="flex w-[520px] shrink-0 items-start gap-[18px] whitespace-nowrap">
      <button className="relative">
        【看盘】
        <i className="absolute top-[18px] left-[19px] border-x-[5px] border-b-[4px] border-x-transparent border-b-white" />
      </button>
      <button>【资金】</button>
      <button>【选股】</button>
      <button>【财富池】</button>
      <button>【经济】</button>
      <button>菜单</button>
      <button>系统</button>
      <button>功能</button>
      <button>分类</button>
    </nav>
    <div className="flex gap-px pt-px">
      {quickTabs.map((t) => (
        <button key={t.label} className={clsx("h-[18px] border bg-linear-to-b leading-4 whitespace-nowrap text-[#82148c]", t.tone, t.width)}>
          {t.label}
        </button>
      ))}
    </div>
    <div className="mt-[1px] ml-auto flex h-3 items-center gap-[15px] pr-3">
      <button className="h-[1px] w-[10px] bg-white" aria-label="最小化" />
      <button className="h-[9px] w-3 border-2 border-white" aria-label="最大化" />
      <button className="h-3 w-[18px]" aria-label="关闭">
        <svg width="18" height="12" viewBox="0 0 18 12">
          <path d="M2 2l14 8M16 2L2 10" stroke="#fff" strokeWidth="3" />
        </svg>
      </button>
    </div>
  </header>
);

const sideTabs = [
  "分时走势", "技术分析", "大盘天气", "持仓比例", "大单买卖", "大单曲线", "大单盘口",
  "资金曲线", "五日十日", "综合资金", "牛叉诊股", "财报掘金", "代码转换", "东财贴吧",
];

const SideTabs = () => (
  <aside className="flex w-[17px] shrink-0 flex-col border-r border-[#3a3a3a] text-xs text-[#c0c0c0]">
    {sideTabs.map((t) => (
      <button
        key={t}
        className={clsx(
          "flex h-[60px] w-4 items-center justify-center border-b border-[#3a3a3a] leading-4 whitespace-nowrap [writing-mode:vertical-rl]",
          t === "技术分析" && "bg-[#b40000] text-white"
        )}
      >
        {t}
      </button>
    ))}
  </aside>
);

const asks = [
  ["卖十¥", "7.20", "508.8万"], ["卖九", "7.19", "258.2万"], ["卖八", "7.18", "151.2万"], ["卖七", "7.17", "36.1万"],
  ["卖六", "7.16", "167.1万"], ["卖五", "7.15", "168.1万"], ["卖四", "7.14", "17.6万"], ["卖三", "7.13", "206.2万"],
  ["卖二", "7.12", "73.2万"], ["卖一", "7.11", "80.6万"],
];
const bids = [
  ["买一", "7.10", "268.5万"], ["买二", "7.09", "272.0万"], ["买三", "7.08", "41.6万"], ["买四", "7.07", "157.9万"],
  ["买五", "7.06", "62.4万"], ["买六", "7.05", "188.5万"], ["买七", "7.04", "209.4万"], ["买八", "7.03", "9.1万"],
  ["买九", "7.02", "117.7万"], ["买十", "7.01", "274.3万"],
];
const askQueue = [
  [750, 7, 20, 18, 5], [3, 3, 11, 62, 10], [1, 20, 15, 30, 4], [49, 10, 30, 9, 2], [1, 7, 1, 10, 15], [5, 10, 6, 3, 10], [2, 5],
];
const bidQueue = [
  [472, 1, 2, 2, 100], [10, 2, 27, 5, 9], [15, 4, 10, 9, 150], [29, 1, 17, 4, 5], [20, 48, 100, 10, 1],
  [4, 15, 16, 2, 19], [15, 30, 5, 50, 3], [26, 20, 10, 10, 15], [29, 30, 2, 30, 5], [4, 10, 30, 1, 10],
];

const DepthMark = ({ down }: { down?: boolean }) => (
  <svg className="ml-px inline-block align-middle" width="6" height="8" viewBox="0 0 6 8">
    {down ? <path d="M0 0h6L3 3zM0 4h6L3 8z" fill={RED} /> : <path d="M3 0l3 4H0zM3 4l3 4H0z" fill="#00a028" />}
  </svg>
);

const DepthTable = ({ rows }: { rows: string[][] }) => (
  <table className="w-full table-fixed">
    <tbody>
      {rows.map(([label, price, amount]) => (
        <tr key={label} className="h-[18px]">
          <td className="w-[83px] p-0 pl-[2px] text-[#c0c0c0]">{label}</td>
          <td className={clsx("p-0 text-[#ff3232]", (label === "卖一" || label === "买一") && "text-[17px] font-bold")}>
            {price}
            {label === "卖十¥" && <DepthMark />}
            {label === "买十" && <DepthMark down />}
          </td>
          <td className="p-0 pr-[5px] text-right text-[#c0c000]">{amount}</td>
        </tr>
      ))}
    </tbody>
  </table>
);

const Queue = ({ name, price, per, count, rows, more }: { name: string; price: string; per: string; count: string; rows: number[][]; more?: boolean }) => (
  <>
    <div className="mx-[2px] flex h-[20px] items-center border-b border-dotted border-[#4a4a4a] leading-5 whitespace-nowrap">
      <span className="w-[72px] text-[#c0c0c0]">{name}</span>
      <span className="w-[49px] text-[#ff3232]">{price}</span>
      <span className="text-[#c0c000]">{per}</span>
      <span className="ml-auto text-[#c0c0c0]">{count}</span>
    </div>
    <table className="mt-px w-[235px] table-fixed text-right leading-[15px] text-[#c0c000]">
      <tbody>
        {rows.map((row, i) => (
          <tr key={i}>
            {[0, 1, 2, 3, 4].map((c) => (
              <td key={c} className="h-[15px] p-0">{row[c]}</td>
            ))}
          </tr>
        ))}
      </tbody>
    </table>
    {more && <p className="w-[47px] text-right leading-[15px] text-[#c0c000]">....</p>}
  </>
);

const DepthPanel = () => (
  <aside className="flex w-[239px] shrink-0 flex-col border-l border-[#3a3a3a] leading-[18px]">
    <DepthTable rows={asks} />
    <div className="flex h-px">
      <div className="w-[117px] bg-[#f0a028]" />
      <div className="flex-1 bg-[#3c82d2]" />
    </div>
    <DepthTable rows={bids} />
    <table className="w-full table-fixed border-y border-[#3a3a3a]">
      <tbody className="text-[#c0c0c0]">
        <tr className="h-[18px]">
          <td className="w-[83px] p-0 pl-[2px]">卖均</td>
          <td className="w-[38px] p-0 text-[#ff3232]">7.35</td>
          <td className="w-[40px] p-0 whitespace-nowrap">总卖</td>
          <td className="p-0 pr-[5px] text-right text-[#c0c000]">1.18亿</td>
        </tr>
        <tr className="h-[18px]">
          <td className="p-0 pl-[2px]">买均</td>
          <td className="p-0 text-[#ff3232]">6.78</td>
          <td className="p-0 whitespace-nowrap">总买</td>
          <td className="p-0 pr-[5px] text-right text-[#c0c000]">5385万</td>
        </tr>
      </tbody>
    </table>
    <div className="flex h-[22px] shrink-0 items-center border-b border-[#3a3a3a] pl-[9px] text-sm text-[#ff3232]">
      <a href="#tick" className="w-[92px]">逐笔分析</a>
      <a href="#depth">查看全速千档盘口</a>
    </div>
    <div className="min-h-0 flex-[431]">
      <Queue name="卖一" price="7.11" per="35.4/笔" count="32笔" rows={askQueue} />
    </div>
    <div className="min-h-0 flex-[400] border-t border-[#3a3a3a]">
      <Queue name="买一" price="7.10" per="41.6/笔" count="91笔" rows={bidQueue} more />
    </div>
  </aside>
);

const UP = "text-[#ff3232]";
const DOWN = "text-[#00be3c]";
const PLAIN = "text-[#c0c0c0]";

const stats = [
  [
    ["今开", "6.60", DOWN, "均价", "7.17", UP],
    ["最高", "7.44", UP, "量比", "1.23", UP],
    ["最低", "6.45", DOWN, "市值", "435.8亿", PLAIN],
    ["现量", "28495", "text-[#c000c0]", "总量", "276.1万", PLAIN],
    ["昨收", "6.76", "text-white", "总额", "19.8亿", "text-[#02e2f4]"],
    ["总笔", "93127", PLAIN, "每笔", "29.7", PLAIN],
  ],
  [
    ["涨停", "7.44", UP, "跌停", "6.08", DOWN],
    ["外盘", "162.5万", UP, "内盘", "113.6万", DOWN],
  ],
  [
    ["净资", "5.15", PLAIN, "股本", "61.3亿", PLAIN],
    ["换手", "5.59%", PLAIN, "流通", "49.4亿", PLAIN],
    ["换手Z", "11.68%", PLAIN, "流通Z", "23.6亿", PLAIN],
    ["收益㈢", "0.789", PLAIN, "PE(动)", "6.8", PLAIN],
  ],
];

const flows = [
  ["净流入额", "w-[5px]", "2.91亿", "15%"],
  ["大宗流入", "w-[3px]", "1.64亿", "8%"],
  ["5日净流入额", "w-[14px]", "7.25亿", "9%"],
  ["5日大宗流入", "w-[6px]", "3.55亿", "4%"],
];

const StatTable = ({ rows, className }: { rows: string[][]; className?: string }) => (
  <table className={clsx("w-full table-fixed border-b border-[#3a3a3a] leading-[19px] whitespace-nowrap", className)}>
    <tbody>
      {rows.map(([l1, v1, c1, l2, v2, c2]) => (
        <tr key={l1} className="h-[19px]">
          <td className="w-[50px] p-0 pl-[2px] text-[#c0c0c0]">{l1}</td>
          <td className={clsx("w-[65px] p-0 text-right", c1)}>
            {l1 === "最高" ? <span className="-mr-px ml-auto block h-[19px] w-min border border-[#3a3a3a] leading-[17px]">{v1}</span> : v1}
          </td>
          <td className="w-[52px] p-0 pl-1 text-[#c0c0c0]">{l2}</td>
          <td className={clsx("p-0 pr-[2px] text-right", c2)}>{v2}</td>
        </tr>
      ))}
    </tbody>
  </table>
);

// amount in 万, lots
const ticks = [
  [6.0, 85], [7.1, 100], [0.7, 10], [0.6, 8], [0.4, 5], [0.7, 10], [0.4, 5], [3.1, 44], [0.1, 1], [0.6, 8], [2.7, 38],
  [0.1, 2], [3.1, 44], [0.1, 1], [0.1, 1], [1.7, 24], [0.7, 10], [0.4, 6], [0.6, 8], [0.5, 7], [0.3, 4], [0.4, 5], [2.0, 28],
  [3.6, 50], [0.6, 9], [0.6, 9], [0.4, 5], [0.9, 13], [0.1, 1], [0.1, 2], [3.0, 0], [7.0, 0], [2.1, 30], [0.7, 10], [0.1, 1],
  [3.6, 51], [0.4, 5], [0.7, 10], [0.7, 10], [2.5, 35], [0.7, 10], [0.7, 10], [2.8, 0], [0.8, 0], [0.7, 10], [0.1, 2],
  [0.1, 1], [1.8, 25], [0.2, 3], [7.1, 100], [1.4, 19], [14.1, 199], [0.9, 12], [1.3, 20],
];
const merged: Record<number, [string, string]> = { 36: ["141", "10.0万"], 48: ["50", "3.6万"] };

const TickList = () => (
  <div className="relative flex min-h-0 flex-1 overflow-hidden font-['Liberation_Sans','Noto_Sans_CJK_SC',sans-serif] text-xs leading-4">
    <table className="h-min w-[193px] table-fixed text-right whitespace-nowrap">
      <tbody>
        {ticks.map(([amount, lots], i) => {
          const second = i + 6;
          return (
            <tr key={second} className="h-4">
              <td className={clsx("w-[48px] p-0", i === 0 ? "text-[#e0e0e0]" : "text-[#8c8c8c]")}>{i === 0 ? "15:00:00" : second}</td>
              <td className="w-[51px] p-0 text-[#ff3232]">7.11</td>
              <td className="w-[43px] p-0 text-[#c0c000]">{amount.toFixed(1)}万</td>
              {merged[second] ? (
                <td rowSpan={2} className="p-0 pl-[10px] leading-[15px] text-[#c0c000]">
                  <div className="h-8 border border-[#3a3a3a] pr-[2px]">
                    {merged[second][0]}
                    <br />
                    {merged[second][1]}
                  </div>
                </td>
              ) : (
                lots > 0 && <td className="p-0 pr-[2px] text-[#c0c000]">{lots}</td>
              )}
            </tr>
          );
        })}
      </tbody>
    </table>
    <div className="flex flex-1 flex-col border-l border-[#3a3a3a] text-right leading-[15px] text-[#ffff00]">
      <div className="flex h-[496px] shrink-0 flex-col justify-center bg-[#0f5019]">952<br />67.7万</div>
      <div className="flex h-[192px] shrink-0 flex-col justify-center border-y border-[#3a3a3a] text-[#c0c000]">309<br />22.0万</div>
      <div className="flex h-[192px] shrink-0 flex-col justify-center bg-[#0f5019]">426<br />30.3万</div>
    </div>
    <div className="absolute right-[33px] bottom-[26px] flex items-center gap-2 font-['Noto_Sans_CJK_SC',sans-serif] text-white">
      <strong className="text-[36px] leading-10 font-black">财富池</strong>
      <div className="font-bold">
        <p className="text-sm leading-4">cfchi.com</p>
        <p className="mt-1 text-[11px] leading-[14px]">指标交易平台</p>
      </div>
    </div>
  </div>
);

const QuotePanel = () => (
  <aside className="flex w-[234px] shrink-0 flex-col border-l border-[#3a3a3a]">
    <div className="h-[61px] shrink-0 border-b border-[#3a3a3a] px-[2px]">
      <h1 className="flex h-[29px] items-center pl-[3px] leading-7">
        <span className="w-3 pt-1 text-[#ff3232]">L</span>
        <span className="text-[19px] font-bold text-[#ffff00]">华菱钢铁</span>
        <span className="pt-1 pl-1 text-[#c0c0c0]">000932</span>
        <span className="flex flex-col items-center text-[10px] leading-[10px] text-[#ff3232]">
          <b>R</b>
          500
        </span>
      </h1>
      <div className="flex justify-between text-[17px] leading-5 font-bold text-[#ff3232]">
        <span>7.11</span>
        <span>▲0.35</span>
        <span>5.18%</span>
      </div>
    </div>
    <StatTable rows={stats[0]} className="mt-[5px]" />
    <StatTable rows={stats[1]} className="mt-px" />
    <StatTable rows={stats[2]} className="mt-px" />
    <table className="mt-px w-full table-fixed leading-[19px] whitespace-nowrap text-[#ff3232]">
      <tbody>
        {flows.map(([label, bar, amount, rate]) => (
          <tr key={label} className="h-[19px]">
            <td className="w-[94px] p-0 pl-[2px] text-[#c0c0c0]">{label}</td>
            <td className="w-[20px] p-0">
              <div className={clsx("h-[7px] bg-[#ff3232]", bar)} />
            </td>
            <td className="w-[80px] p-0 text-right">{amount}</td>
            <td className="p-0 pr-[2px] text-right">{rate}</td>
          </tr>
        ))}
      </tbody>
    </table>
    <div className="mt-px flex h-5 shrink-0 items-center gap-1 border-t border-[#3a3a3a] bg-[#0f0f0f] pr-1 pl-[2px] text-xs text-[#c0c0c0]">
      <Collapse />
      <span>逐笔还原</span>
      <button className="ml-auto pr-1" aria-label="筛选">
        <Filter size={9} />
      </button>
      <button className="font-bold">?</button>
    </div>
    <TickList />
  </aside>
);

export default function App() {
  return (
    <div className="flex h-screen flex-col overflow-hidden bg-black font-['Noto_Sans','Noto_Sans_CJK_SC',sans-serif] text-base">
      <TitleBar />
      <Toolbar />
      <main className="flex min-h-0 flex-1">
        <SideTabs />
        <div className="flex min-w-0 flex-1 flex-col">
          <PeriodBar />
          <div className="relative grid min-h-0 flex-1 grid-rows-[813fr_160fr_159fr_97fr_1px]">
            <PricePanel />
            <VolumePanel />
            <ScorePanel />
            <MacdPanel />
            <div className="flex">
              <div className="ml-[853px] w-[90px] bg-[#000080]" />
              <div className="w-4 bg-[#c0c0c0]" />
            </div>
            <Annotations />
          </div>
        </div>
        <DepthPanel />
        <QuotePanel />
      </main>
    </div>
  );
}
